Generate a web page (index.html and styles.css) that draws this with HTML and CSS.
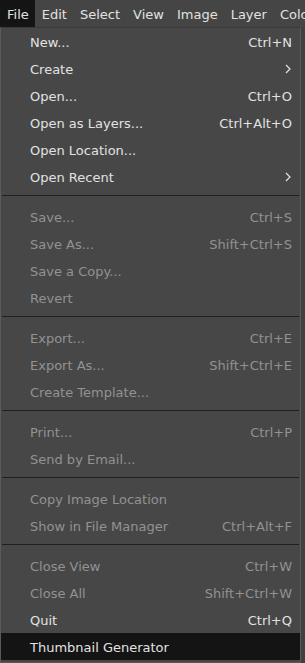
FILE: index.html
```html
<!DOCTYPE html>
<html>
<head>
<meta charset="utf-8">
<link rel="stylesheet" href="styles.css">
</head>
<body>
<div class="menubar">
  <span class="mb-item active">File</span>
  <span class="mb-item">Edit</span>
  <span class="mb-item">Select</span>
  <span class="mb-item">View</span>
  <span class="mb-item">Image</span>
  <span class="mb-item">Layer</span>
  <span class="mb-item">Colors</span>
</div>
<div class="menu">
  <div class="row"><span class="label">New...</span><span class="accel">Ctrl+N</span></div>
  <div class="row"><span class="label">Create</span><svg class="arrow" width="6" height="10" viewBox="0 0 6 10"><path d="M1 1 L5 5 L1 9" fill="none" stroke="#e2e2e2" stroke-width="1.2"/></svg></div>
  <div class="row"><span class="label">Open...</span><span class="accel">Ctrl+O</span></div>
  <div class="row"><span class="label">Open as Layers...</span><span class="accel">Ctrl+Alt+O</span></div>
  <div class="row"><span class="label">Open Location...</span></div>
  <div class="row"><span class="label">Open Recent</span><svg class="arrow" width="6" height="10" viewBox="0 0 6 10"><path d="M1 1 L5 5 L1 9" fill="none" stroke="#e2e2e2" stroke-width="1.2"/></svg></div>
  <div class="sep"></div>
  <div class="row dis"><span class="label">Save...</span><span class="accel">Ctrl+S</span></div>
  <div class="row dis"><span class="label">Save As...</span><span class="accel">Shift+Ctrl+S</span></div>
  <div class="row dis"><span class="label">Save a Copy...</span></div>
  <div class="row dis"><span class="label">Revert</span></div>
  <div class="sep"></div>
  <div class="row dis"><span class="label">Export...</span><span class="accel">Ctrl+E</span></div>
  <div class="row dis"><span class="label">Export As...</span><span class="accel">Shift+Ctrl+E</span></div>
  <div class="row dis"><span class="label">Create Template...</span></div>
  <div class="sep"></div>
  <div class="row dis"><span class="label">Print...</span><span class="accel">Ctrl+P</span></div>
  <div class="row dis"><span class="label">Send by Email...</span></div>
  <div class="sep"></div>
  <div class="row dis"><span class="label">Copy Image Location</span></div>
  <div class="row dis"><span class="label">Show in File Manager</span><span class="accel">Ctrl+Alt+F</span></div>
  <div class="sep"></div>
  <div class="row dis"><span class="label">Close View</span><span class="accel">Ctrl+W</span></div>
  <div class="row dis"><span class="label">Close All</span><span class="accel">Shift+Ctrl+W</span></div>
  <div class="row"><span class="label">Quit</span><span class="accel">Ctrl+Q</span></div>
  <div class="row hl"><span class="label">Thumbnail Generator</span></div>
</div>
</body>
</html>
```

FILE: styles.css
```css
* {
  box-sizing: border-box;
}
html, body {
  margin: 0;
  padding: 0;
  background: #404040;
  height: 663px;
  overflow: hidden;
}
body {
  font-family: "DejaVu Sans", "Noto Sans", sans-serif;
  font-size: 13px;
  color: #e2e2e2;
  width: 305px;
}
.menubar {
  display: flex;
  height: 27px;
  background: #454545;
  white-space: nowrap;
  overflow: hidden;
}
.mb-item {
  display: flex;
  align-items: center;
  padding: 2px 6px 0 7px;
  height: 27px;
  flex: none;
}
.active {
  background: #141414;
}
.menu {
  width: 301px;
  background: #474747;
  border: 1px solid #5a5a5a;
  border-top-color: #3a3a3a;
  padding-bottom: 2px;
}
.row {
  display: flex;
  align-items: center;
  justify-content: space-between;
  height: 27px;
  padding: 2px 8px 0 29px;
}
.dis {
  color: #929292;
}
.hl {
  background: #141414;
}
.arrow {
  margin-right: 1px;
  margin-top: -2px;
}
.sep {
  height: 1px;
  margin: 5px 1px 7px 1px;
  background: #1f1f1f;
}
```
